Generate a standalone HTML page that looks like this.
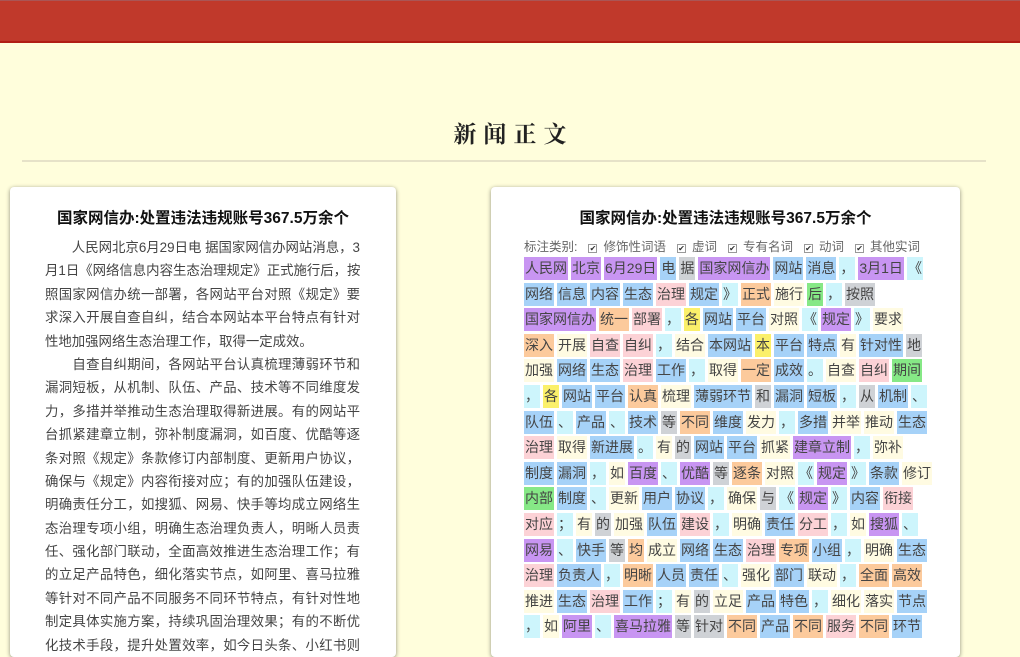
<!DOCTYPE html>
<html><head><meta charset="utf-8">
<style>
*{margin:0;padding:0;box-sizing:border-box}
body{width:1020px;height:638px;overflow:hidden;background:#fffedc;font-family:"Liberation Sans","Noto Sans CJK SC",sans-serif;color:#333;position:relative}
.hdr{position:absolute;left:0;top:0;width:1020px;height:43px;background:#c0392b;border-bottom:2px solid #b01e14;border-top:1px solid #a55}
.ttl{position:absolute;top:116px;left:0;width:1020px;text-align:center;font-family:"Noto Serif CJK SC",serif;font-size:23px;font-weight:bold;letter-spacing:7px;padding-left:7px;color:#222}
.hr{position:absolute;top:160px;left:22px;width:964px;height:2px;background:#e6e2c8}
.card{position:absolute;top:187px;background:#fff;border-radius:4px;box-shadow:0 1px 4px rgba(0,0,0,.45);height:470px}
.c1{left:10px;width:386px}
.c2{left:491px;width:469px}
.ct{position:absolute;top:19px;left:0;width:100%;text-align:center;font-size:15.5px;font-weight:bold;color:#111}
.lt{position:absolute;left:35px;top:49px;width:315px;font-size:13.4px;line-height:23.4px;color:#444}
.lt div{text-align:justify;text-align-last:justify;white-space:nowrap;height:23.4px}
.lt div.n{text-align-last:left}
.lab{position:absolute;left:33px;top:49px;font-size:12.5px;color:#666;white-space:nowrap}
.lab i{font-style:normal;display:inline-block;width:9px;height:9px;border:1px solid #999;font-size:8px;line-height:8px;text-align:center;margin:0 6px 0 11px;color:#333}
.tk{position:absolute;left:33px;top:70px;width:400px;font-size:14px;color:#444}
.tk div{height:25.6px;white-space:nowrap}
.tk span{display:inline-block;height:23px;line-height:23px;padding:0 1px;margin-right:3px}
.P{background:#c895f2}.B{background:#a6d2f8}.O{background:#fcca9c}.K{background:#fcd2d6}.Y{background:#fbf06a}.G{background:#cfd2d6}.N{background:#86e886}.C{background:#cdf5fc}.W{background:#fffbe2}
</style></head><body>
<div class="hdr"></div>
<div class="ttl">新闻正文</div>
<div class="hr"></div>
<div class="card c1">
<div class="ct">国家网信办:处置违法违规账号367.5万余个</div>
<div class="lt">
<div>　　人民网北京6月29日电 据国家网信办网站消息，3</div>
<div>月1日《网络信息内容生态治理规定》正式施行后，按</div>
<div>照国家网信办统一部署，各网站平台对照《规定》要</div>
<div>求深入开展自查自纠，结合本网站本平台特点有针对</div>
<div class="n">性地加强网络生态治理工作，取得一定成效。</div>
<div>　　自查自纠期间，各网站平台认真梳理薄弱环节和</div>
<div>漏洞短板，从机制、队伍、产品、技术等不同维度发</div>
<div>力，多措并举推动生态治理取得新进展。有的网站平</div>
<div>台抓紧建章立制，弥补制度漏洞，如百度、优酷等逐</div>
<div>条对照《规定》条款修订内部制度、更新用户协议，</div>
<div>确保与《规定》内容衔接对应；有的加强队伍建设，</div>
<div>明确责任分工，如搜狐、网易、快手等均成立网络生</div>
<div>态治理专项小组，明确生态治理负责人，明晰人员责</div>
<div>任、强化部门联动，全面高效推进生态治理工作；有</div>
<div>的立足产品特色，细化落实节点，如阿里、喜马拉雅</div>
<div>等针对不同产品不同服务不同环节特点，有针对性地</div>
<div>制定具体实施方案，持续巩固治理效果；有的不断优</div>
<div>化技术手段，提升处置效率，如今日头条、小红书则</div>
</div>
</div>
<div class="card c2">
<div class="ct">国家网信办:处置违法违规账号367.5万余个</div>
<div class="lab">标注类别:<i>✔</i>修饰性词语<i>✔</i>虚词<i>✔</i>专有名词<i>✔</i>动词<i>✔</i>其他实词</div>
<div class="tk">
<div><span class="P">人民网</span><span class="P">北京</span><span class="P">6月29日</span><span class="B">电</span><span class="G">据</span><span class="P">国家网信办</span><span class="B">网站</span><span class="B">消息</span><span class="C">，</span><span class="P">3月1日</span><span class="C">《</span></div>
<div><span class="B">网络</span><span class="B">信息</span><span class="B">内容</span><span class="B">生态</span><span class="K">治理</span><span class="B">规定</span><span class="C">》</span><span class="O">正式</span><span class="W">施行</span><span class="N">后</span><span class="C">，</span><span class="G">按照</span></div>
<div><span class="P">国家网信办</span><span class="O">统一</span><span class="K">部署</span><span class="C">，</span><span class="Y">各</span><span class="B">网站</span><span class="B">平台</span><span class="W">对照</span><span class="C">《</span><span class="P">规定</span><span class="C">》</span><span class="W">要求</span></div>
<div><span class="O">深入</span><span class="W">开展</span><span class="K">自查</span><span class="K">自纠</span><span class="C">，</span><span class="W">结合</span><span class="B">本网站</span><span class="Y">本</span><span class="B">平台</span><span class="B">特点</span><span class="W">有</span><span class="B">针对性</span><span class="G">地</span></div>
<div><span class="W">加强</span><span class="B">网络</span><span class="B">生态</span><span class="K">治理</span><span class="B">工作</span><span class="C">，</span><span class="W">取得</span><span class="O">一定</span><span class="B">成效</span><span class="C">。</span><span class="W">自查</span><span class="K">自纠</span><span class="N">期间</span></div>
<div><span class="C">，</span><span class="Y">各</span><span class="B">网站</span><span class="B">平台</span><span class="O">认真</span><span class="W">梳理</span><span class="B">薄弱环节</span><span class="G">和</span><span class="B">漏洞</span><span class="B">短板</span><span class="C">，</span><span class="G">从</span><span class="B">机制</span><span class="C">、</span></div>
<div><span class="B">队伍</span><span class="C">、</span><span class="B">产品</span><span class="C">、</span><span class="B">技术</span><span class="G">等</span><span class="O">不同</span><span class="B">维度</span><span class="W">发力</span><span class="C">，</span><span class="B">多措</span><span class="W">并举</span><span class="W">推动</span><span class="B">生态</span></div>
<div><span class="K">治理</span><span class="W">取得</span><span class="B">新进展</span><span class="C">。</span><span class="W">有</span><span class="G">的</span><span class="B">网站</span><span class="B">平台</span><span class="W">抓紧</span><span class="P">建章立制</span><span class="C">，</span><span class="W">弥补</span></div>
<div><span class="B">制度</span><span class="B">漏洞</span><span class="C">，</span><span class="W">如</span><span class="P">百度</span><span class="C">、</span><span class="P">优酷</span><span class="G">等</span><span class="O">逐条</span><span class="W">对照</span><span class="C">《</span><span class="P">规定</span><span class="C">》</span><span class="B">条款</span><span class="W">修订</span></div>
<div><span class="N">内部</span><span class="B">制度</span><span class="C">、</span><span class="W">更新</span><span class="B">用户</span><span class="B">协议</span><span class="C">，</span><span class="W">确保</span><span class="G">与</span><span class="C">《</span><span class="P">规定</span><span class="C">》</span><span class="B">内容</span><span class="K">衔接</span></div>
<div><span class="K">对应</span><span class="C">；</span><span class="W">有</span><span class="G">的</span><span class="W">加强</span><span class="B">队伍</span><span class="K">建设</span><span class="C">，</span><span class="W">明确</span><span class="B">责任</span><span class="K">分工</span><span class="C">，</span><span class="W">如</span><span class="P">搜狐</span><span class="C">、</span></div>
<div><span class="P">网易</span><span class="C">、</span><span class="B">快手</span><span class="G">等</span><span class="O">均</span><span class="W">成立</span><span class="B">网络</span><span class="B">生态</span><span class="K">治理</span><span class="O">专项</span><span class="B">小组</span><span class="C">，</span><span class="W">明确</span><span class="B">生态</span></div>
<div><span class="K">治理</span><span class="B">负责人</span><span class="C">，</span><span class="O">明晰</span><span class="B">人员</span><span class="B">责任</span><span class="C">、</span><span class="W">强化</span><span class="B">部门</span><span class="W">联动</span><span class="C">，</span><span class="O">全面</span><span class="O">高效</span></div>
<div><span class="W">推进</span><span class="B">生态</span><span class="K">治理</span><span class="B">工作</span><span class="C">；</span><span class="W">有</span><span class="G">的</span><span class="W">立足</span><span class="B">产品</span><span class="B">特色</span><span class="C">，</span><span class="W">细化</span><span class="W">落实</span><span class="B">节点</span></div>
<div><span class="C">，</span><span class="W">如</span><span class="P">阿里</span><span class="C">、</span><span class="P">喜马拉雅</span><span class="G">等</span><span class="G">针对</span><span class="O">不同</span><span class="B">产品</span><span class="O">不同</span><span class="K">服务</span><span class="O">不同</span><span class="B">环节</span></div>
</div>
</div>
</body></html>
